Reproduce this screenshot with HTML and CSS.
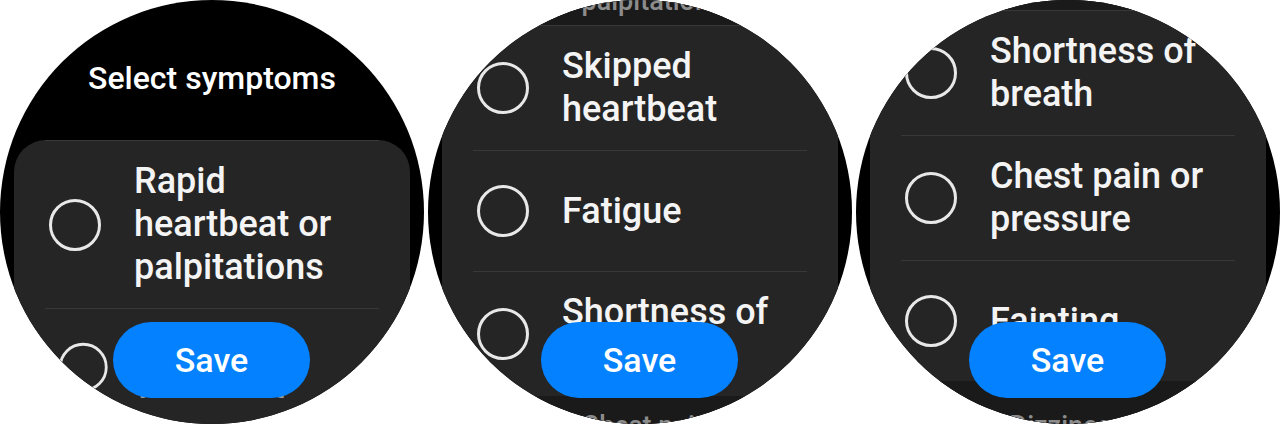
FILE: index.html
```html
<!doctype html>
<html lang="en">
<head>
  <meta charset="utf-8">
  <meta name="viewport" content="width=device-width,initial-scale=1">
  <title>Select symptoms</title>
  <link rel="stylesheet" href="styles.css">
</head>
<body>
  <main class="screens">

    <!-- first screen: title + first item focused -->
    <section class="watch">
      <div class="face">
        <h1 class="face-title">Select symptoms</h1>
        <div class="list list--card">
          <hr class="divider">
          <div class="item"><span class="radio"></span><span class="label">Rapid heartbeat or palpitations</span></div>
          <hr class="divider">
          <div class="item item--fading"><span class="radio"></span><span class="label">Skipped heartbeat</span></div>
        </div>
      </div>
      <button class="save">Save</button>
    </section>

    <!-- second screen: scrolled one item down -->
    <section class="watch">
      <div class="face">
        <div class="list">
          <div class="ghost ghost--top ghost--h25">
            <div class="item"><span class="radio"></span><span class="label">Rapid heartbeat or palpitations</span></div>
          </div>
          <hr class="divider">
          <div class="item"><span class="radio"></span><span class="label">Skipped heartbeat</span></div>
          <hr class="divider">
          <div class="item"><span class="radio"></span><span class="label">Fatigue</span></div>
          <hr class="divider">
          <div class="item"><span class="radio"></span><span class="label">Shortness of breath</span></div>
          <div class="ghost ghost--bottom">
            <div class="item"><span class="radio"></span><span class="label">Chest pain or pressure</span></div>
          </div>
        </div>
      </div>
      <button class="save">Save</button>
    </section>

    <!-- third screen: scrolled further -->
    <section class="watch">
      <div class="face">
        <div class="list">
          <div class="ghost ghost--top ghost--h10">
            <div class="item"><span class="radio"></span><span class="label">Fatigue</span></div>
          </div>
          <hr class="divider">
          <div class="item"><span class="radio"></span><span class="label">Shortness of breath</span></div>
          <hr class="divider">
          <div class="item"><span class="radio"></span><span class="label">Chest pain or pressure</span></div>
          <hr class="divider">
          <div class="item"><span class="radio"></span><span class="label">Fainting</span></div>
          <div class="ghost ghost--bottom">
            <div class="item"><span class="radio"></span><span class="label">Dizziness</span></div>
          </div>
        </div>
      </div>
      <button class="save">Save</button>
    </section>

  </main>
</body>
</html>
```

FILE: styles.css
```css
:root{ --face:#000; --card:#252525; --ghost:#1a1a1a; --line:#383838; --text:#f4f4f4; --dim:#8c8c8c; --blue:#0381fe; }
*{box-sizing:border-box;}
body{ margin:0; background:#fff; font-family:Roboto,"Noto Sans",sans-serif; }

.screens{ display:flex; gap:4px; }
.watch{ position:relative; width:424px; height:424px; flex:none; }
.face{ width:100%; height:100%; border-radius:50%; overflow:hidden; background:var(--face); display:flex; flex-direction:column; align-items:center; }
.face-title{ flex:none; width:100%; height:140px; margin:0; padding-top:58px; font-size:32px; line-height:40px; font-weight:500; color:#fff; text-align:center; }

.list{ width:396px; flex:1; display:flex; flex-direction:column; background:var(--card); }
.list--card{ border-radius:32px 32px 0 0; }
.divider{ flex:none; height:1px; margin:0 31px; border:0; background:var(--line); }

.item{ flex:none; display:flex; align-items:center; gap:33px; min-height:120px; padding:19px 31px 19px 35px; color:var(--text); font-size:36px; line-height:43px; font-weight:500; }
.radio{ flex:none; width:52px; height:52px; border:3px solid #e8e8e8; border-radius:50%; }
.label{ flex:1; }
.item--fading{ transform:scale(.94); transform-origin:50% 0; }
.item--fading .label{ color:#9e9e9e; }

/* items scrolled out of the focus area: smaller and dimmed */
.ghost{ flex:none; display:flex; flex-direction:column; background:var(--ghost); }
.ghost--top{ justify-content:flex-end; }
.ghost--bottom{ flex:1; }
.ghost--h25{ height:25px; }
.ghost--h10{ height:10px; }
.ghost .item{ transform:scale(.75); color:var(--dim); }
.ghost .radio{ border-color:#6e6e6e; }
.ghost--top .item{ transform-origin:50% 100%; padding-bottom:10px; }
.ghost--bottom .item{ transform-origin:50% 0; }

.save{ position:absolute; left:113px; bottom:26px; width:197px; height:76px; padding:0; border:0; border-radius:38px; background:var(--blue); color:#fff; font-family:Roboto,"Noto Sans",sans-serif; font-size:34px; font-weight:500; cursor:pointer; }
```
